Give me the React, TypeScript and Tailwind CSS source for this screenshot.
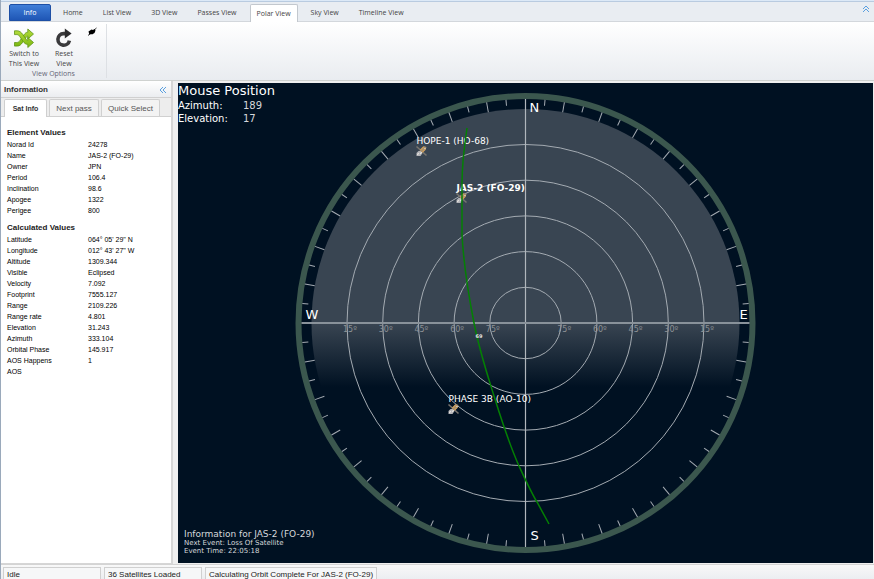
import { useState } from "react";

const ribbonTabs = [
  "Home",
  "List View",
  "3D View",
  "Passes View",
  "Polar View",
  "Sky View",
  "Timeline View",
];

const elementValues: [string, string][] = [
  ["Norad Id", "24278"],
  ["Name", "JAS-2 (FO-29)"],
  ["Owner", "JPN"],
  ["Period", "106.4"],
  ["Inclination", "98.6"],
  ["Apogee", "1322"],
  ["Perigee", "800"],
];

const calculatedValues: [string, string][] = [
  ["Latitude", "064° 05' 29\" N"],
  ["Longitude", "012° 43' 27\" W"],
  ["Altitude", "1309.344"],
  ["Visible", "Eclipsed"],
  ["Velocity", "7.092"],
  ["Footprint", "7555.127"],
  ["Range", "2109.226"],
  ["Range rate", "4.801"],
  ["Elevation", "31.243"],
  ["Azimuth", "333.104"],
  ["Orbital Phase", "145.917"],
  ["AOS Happens", "1"],
  ["AOS", ""],
];

function ShuffleIcon() {
  return (
    <svg viewBox="0 0 22 22" className="size-[22px]" aria-hidden="true">
      <defs>
        <linearGradient id="leaf" x1="0" y1="0" x2="0" y2="1">
          <stop offset="0" stopColor="#b4dc3c" />
          <stop offset="1" stopColor="#7cb810" />
        </linearGradient>
      </defs>
      <g fill="url(#leaf)" stroke="#5f9418" strokeWidth="0.8" strokeLinejoin="round">
        <path d="M1.500 15.500h2.200c1.500 0 2.400-.8 3.400-2.100l3.800-5.500c1.400-1.900 2.300-2.700 3.900-2.700V2L20.500 7l-5.700 5V9.200c-.7 0-1.200.4-1.900 1.400l-3.300 4.800c-1.600 2.200-3 3.700-5.500 3.700H1.500z" />
        <path d="M1.500 3.800h2.700c2.300 0 3.900 1.400 5.400 3.500l3.400 4.800c.7 1 1.100 1.300 1.800 1.300v-2.900l5.700 5-5.700 5v-3.100c-2 0-3.400-1.100-4.700-3l-3.300-4.800C6 8.400 5.300 7.600 3.900 7.600H1.500z" />
      </g>
    </svg>
  );
}

function ResetIcon() {
  return (
    <svg viewBox="0 0 22 22" className="size-[22px]" aria-hidden="true">
      <path d="M13.500 6.600H10.500a5.800 5.800 0 1 0 5.900 7" fill="none" stroke="#3a3a3c" strokeWidth="3.600" />
      <path d="M11.800 1.400l6.800 5.100-6.800 5.100z" fill="#2c2c2e" />
    </svg>
  );
}

function PlugIcon() {
  return (
    <svg viewBox="0 0 10 10" className="size-[10px]" aria-hidden="true">
      <path d="M1 8.500L9.500 1" stroke="#333" strokeWidth="1" />
      <path d="M1.500 4.500L4.500 2.500 6 3 7.500 2 8.500 3.500 7.500 6 5 7.500 4 7 2.500 8z" fill="#000" />
    </svg>
  );
}

function CollapseIcon({ up = false }: { up?: boolean }) {
  return (
    <svg viewBox="0 0 8 8" className="size-2" fill="none" stroke="#5aa0e0" strokeWidth="1" aria-hidden="true">
      {up ? <path d="M1 4l3-3 3 3M1 7l3-3 3 3" /> : <path d="M4 1L1 4l3 3M7 1L4 4l3 3" />}
    </svg>
  );
}

function ValueTable({ title, rows }: { title: string; rows: [string, string][] }) {
  return (
    <table className="w-full table-fixed text-left text-[7px] leading-[11px] text-black">
      <caption className="text-left text-[8px] leading-[13px] font-bold text-[#222]">{title}</caption>
      <tbody>
        {rows.map(([name, value]) => (
          <tr key={name} className="h-[11px]">
            <th scope="row" className="w-[81px] font-normal">{name}</th>
            <td>{value}</td>
          </tr>
        ))}
      </tbody>
    </table>
  );
}

const ticks = Array.from({ length: 72 }, (_, i) => i * 5).filter((deg) => deg % 90 !== 0);
const rings = [1, 2, 3, 4, 5];
const ringStep = 35.7;

const satellites = [
  { name: "HOPE-1 (HO-68)", x: -104, y: -172, labelX: -109, bold: false },
  { name: "JAS-2 (FO-29)", x: -64, y: -125, labelX: -69, bold: true },
  { name: "PHASE 3B (AO-10)", x: -72, y: 86, labelX: -77, bold: false },
];

function SatelliteMark() {
  return (
    <>
      <path d="M-5-4.500L5 4.500M-4 4L4-4" stroke="#77746f" strokeWidth="1.600" />
      <path d="M-5 2l2-2 3 0 1 2-2 3-4 0z" fill="#b4b4b8" />
      <path d="M-2-1L2-5l3 1-1 3-3 3z" fill="#a98f6c" />
      <path d="M-1-1l3-3M1 1l3-3" stroke="#e0a850" strokeWidth="1" />
      <path d="M-4 4l1-2M-1 3l1-2M3-2l1-1" stroke="#f1efe8" strokeWidth="1" />
    </>
  );
}

function PolarChart() {
  return (
    <svg viewBox="-347.5 -240 695 480" className="size-full" fontFamily="'DejaVu Sans', sans-serif" role="img" aria-label="Polar view">
      <defs>
        <linearGradient id="sky" gradientUnits="userSpaceOnUse" x1="0" y1="0" x2="0" y2="64">
          <stop offset="0" stopColor="#394552" />
          <stop offset="1" stopColor="#001122" />
        </linearGradient>
      </defs>
      <circle r="214" fill="url(#sky)" />
      <circle r="227" fill="none" stroke="#3b574e" strokeWidth="6" />
      <g stroke="#a4abb2" strokeWidth="1">
        {ticks.map((deg) => (
          <line key={deg} y1="-224" y2={deg % 10 === 0 ? -214 : -218} transform={`rotate(${deg})`} />
        ))}
      </g>
      <g fill="none" stroke="#a4abb2" strokeWidth="1">
        {rings.map((n) => (
          <circle key={n} r={n * ringStep} />
        ))}
      </g>
      <path d="M0-224V224" stroke="#b0b6bc" strokeWidth="1.200" />
      <path d="M-224 0H224" stroke="#89929a" strokeWidth="1.800" />
      <g fontSize="8" fill="#8e9296" textAnchor="middle">
        {rings.map((n) => (
          <g key={n}>
            <text x={-n * ringStep + 3} y="9">{90 - n * 15}º</text>
            <text x={n * ringStep + 3} y="9">{90 - n * 15}º</text>
          </g>
        ))}
      </g>
      <g fontSize="13" fill="#fff">
        <text x="4" y="-211">N</text>
        <text x="5" y="217">S</text>
        <text x="-220" y="-4">W</text>
        <text x="214" y="-4">E</text>
      </g>
      {satellites.map((sat) => (
        <g key={sat.name}>
          <g transform={`translate(${sat.x} ${sat.y})`}>
            <SatelliteMark />
          </g>
          <text x={sat.labelX} y={sat.y - 7} fontSize="9" fontWeight={sat.bold ? 700 : 400} fill="#fff">
            {sat.name}
          </text>
        </g>
      ))}
      <path
        d="M-58.500-195C-61-178-63.500-160-63.500-140V-88C-62-62-57-28-51.500 0C-46 28-38 52-31.500 73C-24 97-15 124-6.500 143C0 157 6 170 11.500 179L23.500 201"
        fill="none"
        stroke="#048004"
        strokeWidth="1.500"
      />
      <text x="-50" y="15" fontSize="5" fontWeight="700" fill="#e4e4e4">69</text>
    </svg>
  );
}

export default function App() {
  const [active, setActive] = useState("Polar View");

  return (
    <div className="flex h-screen flex-col overflow-hidden border-l border-[#9aa9bb] bg-[#efefef] font-['Liberation_Sans',Arial,sans-serif]">
      <header className="shrink-0 border-t border-[#dce9f7] font-['Open_Sans',sans-serif] text-[7px] text-[#444]">
        <nav className="flex h-[21px] items-end border-t border-b border-[#b9cbe0] border-b-[#d3d7dc] bg-[#e9edf2] pl-2">
          <button className="mr-[2px] h-[17px] w-[42px] rounded-t-xs border border-[#1d4fa5] bg-linear-to-b from-[#3f7ed8] to-[#1f56b5] pt-px text-white">
            Info
          </button>
          {ribbonTabs.map((tab) => (
            <button
              key={tab}
              onClick={() => setActive(tab)}
              className={
                active === tab
                  ? "-mb-px h-[18px] rounded-t-xs border border-b-0 border-[#c3c8ce] bg-white px-[6px] pt-px mx-[3px]"
                  : "h-[17px] px-[10px] pt-[2px]"
              }
            >
              {tab}
            </button>
          ))}
          <button aria-label="Collapse ribbon" className="mr-1 mb-2 ml-auto">
            <CollapseIcon up />
          </button>
        </nav>
        <section className="flex h-[59px] border-b border-[#cfd2d0] bg-linear-to-b from-white to-[#e9ecf0]">
          <div className="my-[2px] flex w-[106px] flex-col border-r border-[#dde0e4]">
            <div className="flex items-start pt-[3px]">
              <button className="flex w-[46px] flex-col items-center leading-[10px]">
                <ShuffleIcon />
                <span>Switch to<br />This View</span>
              </button>
              <button className="flex w-[34px] flex-col items-center leading-[10px]">
                <ResetIcon />
                <span>Reset<br />View</span>
              </button>
              <button aria-label="Connect" className="ml-[6px]">
                <PlugIcon />
              </button>
            </div>
            <div className="text-center leading-[9px] text-[#667]">View Options</div>
          </div>
        </section>
      </header>

      <main className="flex min-h-0 flex-1 gap-[5px]">
        <aside className="flex w-[172px] shrink-0 flex-col border-r-2 border-b border-[#d6d6d6] bg-white">
          <h1 className="flex h-[17px] items-center justify-between border-b border-[#d0d0d0] bg-linear-to-b from-white to-[#ebedf0] pt-px pr-1 pl-[3px] text-[8px] font-bold text-[#333]">
            Information
            <button aria-label="Collapse panel">
              <CollapseIcon />
            </button>
          </h1>
          <div role="tablist" className="flex h-[19px] items-end gap-[2px] border-b border-[#d0d0d0] bg-[#ededed] pl-[3px] text-[8px] text-[#555]">
            <button role="tab" aria-selected="true" className="-mb-px h-[18px] w-[43px] rounded-t-xs border border-b-0 border-[#cfcfcf] bg-white pt-px text-[7px] font-bold text-[#333]">
              Sat Info
            </button>
            <button role="tab" aria-selected="false" className="h-[17px] w-[50px] rounded-t-xs border border-b-0 border-[#d0d0d0] bg-[#f3f3f3] pt-px">
              Next pass
            </button>
            <button role="tab" aria-selected="false" className="h-[17px] w-[59px] rounded-t-xs border border-b-0 border-[#d0d0d0] bg-[#f3f3f3] pt-px">
              Quick Select
            </button>
          </div>
          <div className="flex flex-col gap-[5px] px-[6px] pt-[9px]">
            <ValueTable title="Element Values" rows={elementValues} />
            <ValueTable title="Calculated Values" rows={calculatedValues} />
          </div>
        </aside>

        <section className="relative mt-[2px] mr-px mb-px min-w-0 flex-1 bg-[#001122] font-['DejaVu_Sans',sans-serif] text-white">
          <PolarChart />
          <div className="absolute top-0 left-0 text-[10px] leading-[13px]">
            <h2 className="text-[13px] leading-4">Mouse Position</h2>
            <dl className="grid grid-cols-[65px_auto]">
              <dt>Azimuth:</dt>
              <dd className="text-[#d5d8db]">189</dd>
              <dt>Elevation:</dt>
              <dd className="text-[#d5d8db]">17</dd>
            </dl>
          </div>
          <div className="absolute bottom-2 left-[6px] text-[7px] leading-2 text-[#d5d8db]">
            <h2 className="text-[9px] leading-[10px]">Information for JAS-2 (FO-29)</h2>
            <p>Next Event: Loss Of Satellite</p>
            <p>Event Time: 22:05:18</p>
          </div>
        </section>
      </main>

      <footer className="flex h-[15px] shrink-0 items-end gap-[3px] border-t border-[#d4d4d4] bg-linear-to-b from-[#f8f8f8] to-[#eceef1] pl-[2px] text-[8px] leading-[10px] text-[#222]">
        <div className="h-3 w-[98px] border border-b-0 border-[#d0d0d0] bg-[#f6f7f8] px-[3px] pt-[2px]">Idle</div>
        <div className="h-3 w-[98px] border border-b-0 border-[#d0d0d0] bg-[#f6f7f8] px-[3px] pt-[2px]">36 Satellites Loaded</div>
        <div className="h-3 border border-b-0 border-[#d0d0d0] bg-[#f6f7f8] px-[3px] pt-[2px]">Calculating Orbit Complete For JAS-2 (FO-29)</div>
      </footer>
    </div>
  );
}
